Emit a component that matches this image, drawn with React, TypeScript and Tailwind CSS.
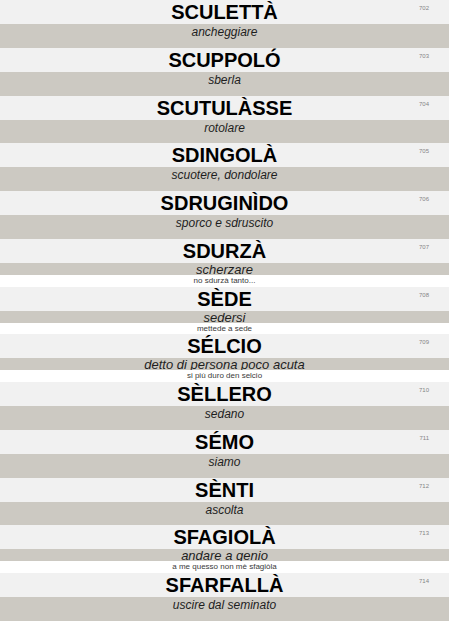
import React from 'react'

type Entry = {
  n: number
  word: string
  meaning: string
  example?: string
}

const entries: Entry[] = [
  { n: 702, word: 'SCULETTÀ', meaning: 'ancheggiare' },
  { n: 703, word: 'SCUPPOLÓ', meaning: 'sberla' },
  { n: 704, word: 'SCUTULÀSSE', meaning: 'rotolare' },
  { n: 705, word: 'SDINGOLÀ', meaning: 'scuotere, dondolare' },
  { n: 706, word: 'SDRUGINÌDO', meaning: 'sporco e sdruscito' },
  { n: 707, word: 'SDURZÀ', meaning: 'scherzare', example: 'no sdurzà tanto...' },
  { n: 708, word: 'SÈDE', meaning: 'sedersi', example: 'mettede a sede' },
  { n: 709, word: 'SÉLCIO', meaning: 'detto di persona poco acuta', example: 'si più duro den selcio' },
  { n: 710, word: 'SÈLLERO', meaning: 'sedano' },
  { n: 711, word: 'SÉMO', meaning: 'siamo' },
  { n: 712, word: 'SÈNTI', meaning: 'ascolta' },
  { n: 713, word: 'SFAGIOLÀ', meaning: 'andare a genio', example: 'a me quesso non mè sfagiòla' },
  { n: 714, word: 'SFARFALLÀ', meaning: 'uscire dal seminato' },
]

function Row({ e }: { e: Entry }) {
  return (
    <div>
      <div className="relative h-[24px] bg-[#f1f1f1] text-center">
        <h2 className="text-[20px] font-bold leading-[24px] text-black">{e.word}</h2>
        <span className="absolute right-[20px] top-[5px] text-[6px] leading-[6px] text-[#858585]">{e.n}</span>
      </div>
      {e.example ? (
        <>
          <div className="h-[12px] overflow-hidden bg-[#ccc9c2] pt-px text-center text-[13px] italic leading-[12px] text-[#1e1e1e]">
            {e.meaning}
          </div>
          <div className="h-[11.75px] bg-white text-center text-[8px] leading-[12px] text-[#3a3a3a]">{e.example}</div>
        </>
      ) : (
        <div className="h-[23.75px] bg-[#ccc9c2] text-center text-[12px] italic leading-[16px] text-[#1e1e1e]">
          {e.meaning}
        </div>
      )}
    </div>
  )
}

export default function App() {
  return (
    <div className="min-h-[640px] bg-white font-['Liberation_Sans',Arial,sans-serif]">
      <div className="w-[449px]">
        {entries.map((e) => (
          <Row key={e.n} e={e} />
        ))}
      </div>
    </div>
  )
}
